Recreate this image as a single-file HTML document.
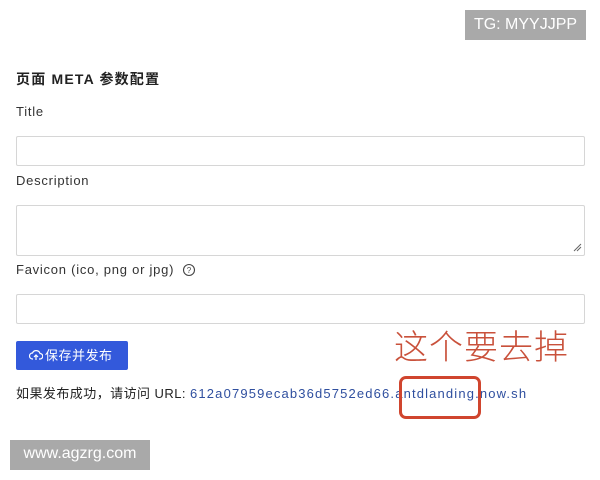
<!DOCTYPE html>
<html><head><meta charset="utf-8"><style>
body{margin:0;width:600px;height:480px;background:#fff;position:relative;font-family:"Liberation Sans","Noto Sans CJK SC",sans-serif;color:#222;overflow:hidden}
.a{position:absolute}
.inp{position:absolute;left:16px;width:567px;border:1px solid #d6d6d6;border-radius:2px;background:#fff}
.lbl{font-size:13px;color:#333;letter-spacing:0.75px}
</style></head><body>
<div class="a" style="left:465px;top:10px;width:121px;height:30px;background:#a9a9a9;color:#fff;font-size:16px;line-height:30px;text-align:center">TG: MYYJJPP</div>
<div class="a" style="left:16px;top:69px;font-size:14px;font-weight:bold;color:#222;letter-spacing:1.2px">页面 META 参数配置</div>
<div class="a lbl" style="left:16px;top:104px">Title</div>
<div class="inp" style="top:136px;height:28px"></div>
<div class="a lbl" style="left:16px;top:173px">Description</div>
<div class="inp" style="top:205px;height:49px"></div>
<svg class="a" style="left:572px;top:242px" width="10" height="10"><path d="M2 9L9 2M5 9L9 5" stroke="#666" stroke-width="1"/></svg>
<div class="a lbl" style="left:16px;top:262px">Favicon (ico, png or jpg)</div>
<svg class="a" style="left:182px;top:263px" width="14" height="14"><circle cx="7" cy="7" r="5.5" fill="none" stroke="#444" stroke-width="1.1"/><text x="7" y="10" font-size="8" text-anchor="middle" fill="#444" font-family="Liberation Sans">?</text></svg>
<div class="inp" style="top:294px;height:28px"></div>
<div class="a" style="left:16px;top:341px;width:112px;height:29px;background:#3359db;border-radius:2px;color:#fff;font-size:13px;line-height:29px">
<svg style="position:absolute;left:13px;top:8px" width="14" height="12"><path d="M4 10H3.5A3 3 0 0 1 3.5 4A4 4 0 0 1 11 4.5A2.7 2.7 0 0 1 11 10H10M7 11V6M5 8L7 6L9 8" fill="none" stroke="#fff" stroke-width="1.2"/></svg>
<span style="position:absolute;left:29px;letter-spacing:0.5px">保存并发布</span></div>
<div class="a" style="left:16px;top:383px;font-size:13px;color:#222;white-space:nowrap;letter-spacing:0.45px">如果发布成功，请访问 URL: <span style="color:#2f4f9f;letter-spacing:1.15px">612a07959ecab36d5752ed66.antdlanding.now.sh</span></div>
<div class="a" style="left:399px;top:376px;width:82px;height:43px;border:3px solid #d0452e;border-radius:7px;box-sizing:border-box"></div>
<div class="a" style="left:394px;top:320px;font-size:34px;color:#c9513b;letter-spacing:1px;font-family:'Noto Sans CJK SC',sans-serif;font-weight:300">这个要去掉</div>
<div class="a" style="left:10px;top:440px;width:140px;height:30px;background:#a9a9a9;color:#fff;font-size:16px;line-height:28px;text-align:center">www.agzrg.com</div>
</body></html>
